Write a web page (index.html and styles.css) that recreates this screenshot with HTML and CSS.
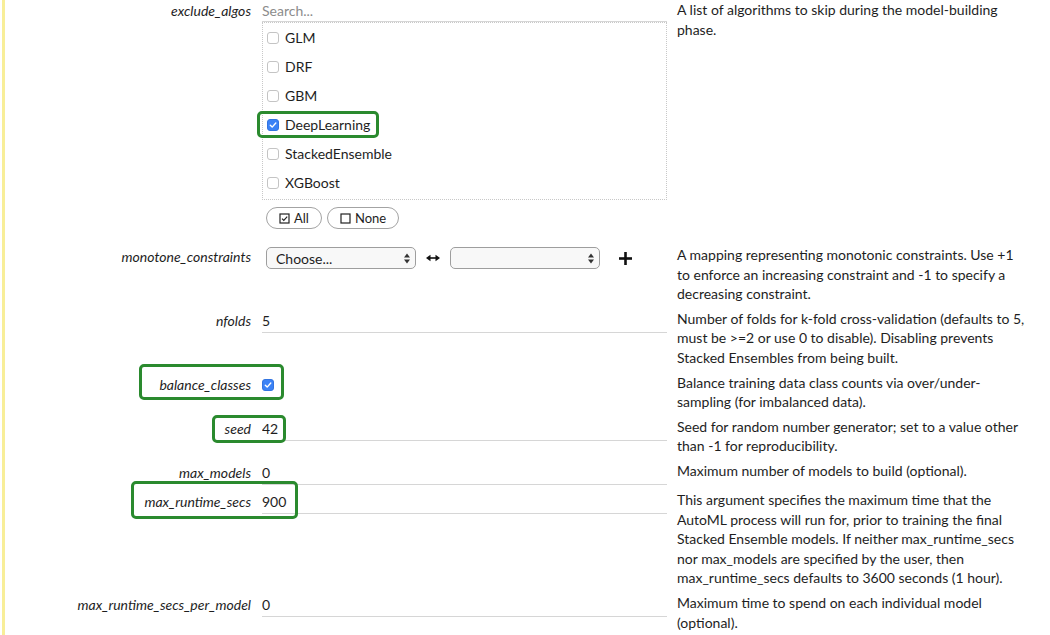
FILE: index.html
```html
<!DOCTYPE html>
<html lang="en">
<head>
<meta charset="utf-8">
<title>AutoML parameters</title>
<link rel="stylesheet" href="styles.css">
</head>
<body>
<div class="page">
  <div class="form">

    <div class="row first">
      <div class="label"><span>exclude_algos</span></div>
      <div class="control">
        <input class="text search" type="text" placeholder="Search...">
        <div class="list">
          <div class="item"><span class="item-in"><span class="cb"></span>GLM</span></div>
          <div class="item"><span class="item-in"><span class="cb"></span>DRF</span></div>
          <div class="item"><span class="item-in"><span class="cb"></span>GBM</span></div>
          <div class="item"><span class="item-in hl hl-deep"><span class="cb on"><svg width="10" height="10" viewBox="0 0 10 10"><polyline points="2.3,5.2 4.2,7.1 7.8,3" fill="none" stroke="#fff" stroke-width="1.4" stroke-linecap="round" stroke-linejoin="round"/></svg></span>DeepLearning</span></div>
          <div class="item"><span class="item-in"><span class="cb"></span>StackedEnsemble</span></div>
          <div class="item"><span class="item-in"><span class="cb"></span>XGBoost</span></div>
        </div>
        <div class="btns">
          <button class="pill" type="button"><svg width="11" height="11" viewBox="0 0 11 11"><rect x="1" y="1" width="9" height="9" fill="none" stroke="#222" stroke-width="1.2"/><polyline points="3,5.6 4.8,7.4 8.2,3.6" fill="none" stroke="#222" stroke-width="1.2"/></svg>All</button>
          <button class="pill" type="button"><svg width="11" height="11" viewBox="0 0 11 11"><rect x="1" y="1" width="9" height="9" fill="none" stroke="#222" stroke-width="1.2"/></svg>None</button>
        </div>
      </div>
      <div class="desc">A list of algorithms to skip during the model-building phase.</div>
    </div>

    <div class="row">
      <div class="label"><span>monotone_constraints</span></div>
      <div class="control mono">
        <div class="select">
          <select><option>Choose...</option></select>
          <svg class="arrows" width="6" height="11" viewBox="0 0 6 11"><polygon points="0,4.5 3,0.5 6,4.5" fill="#333"/><polygon points="0,6.5 3,10.5 6,6.5" fill="#333"/></svg>
        </div>
        <svg class="lr" width="14" height="8" viewBox="0 0 14 8"><line x1="3" y1="4" x2="11" y2="4" stroke="#111" stroke-width="1.6"/><polygon points="0,4 4.5,0.8 4.5,7.2" fill="#111"/><polygon points="14,4 9.5,0.8 9.5,7.2" fill="#111"/></svg>
        <div class="select">
          <select><option></option></select>
          <svg class="arrows" width="6" height="11" viewBox="0 0 6 11"><polygon points="0,4.5 3,0.5 6,4.5" fill="#333"/><polygon points="0,6.5 3,10.5 6,6.5" fill="#333"/></svg>
        </div>
        <svg class="plus" width="13" height="13" viewBox="0 0 13 13"><line x1="6.5" y1="0" x2="6.5" y2="13" stroke="#111" stroke-width="2.6"/><line x1="0" y1="6.5" x2="13" y2="6.5" stroke="#111" stroke-width="2.6"/></svg>
      </div>
      <div class="desc">A mapping representing monotonic constraints. Use +1 to enforce an increasing constraint and -1 to specify a decreasing constraint.</div>
    </div>

    <div class="row">
      <div class="label"><span>nfolds</span></div>
      <div class="control"><input class="text" type="text" value="5"></div>
      <div class="desc">Number of folds for k-fold cross-validation (defaults to 5, must be &gt;=2 or use 0 to disable). Disabling prevents Stacked Ensembles from being built.</div>
    </div>

    <div class="row">
      <div class="label"><span class="hl hl-balance">balance_classes</span></div>
      <div class="control check"><span class="cb on solo"><svg width="10" height="10" viewBox="0 0 10 10"><polyline points="2.3,5.2 4.2,7.1 7.8,3" fill="none" stroke="#fff" stroke-width="1.4" stroke-linecap="round" stroke-linejoin="round"/></svg></span></div>
      <div class="desc">Balance training data class counts via over/under-sampling (for imbalanced data).</div>
    </div>

    <div class="row">
      <div class="label"><span class="hl hl-seed">seed</span></div>
      <div class="control"><input class="text" type="text" value="42"></div>
      <div class="desc">Seed for random number generator; set to a value other than -1 for reproducibility.</div>
    </div>

    <div class="row">
      <div class="label"><span>max_models</span></div>
      <div class="control"><input class="text" type="text" value="0"></div>
      <div class="desc">Maximum number of models to build (optional).</div>
    </div>

    <div class="row">
      <div class="label"><span class="hl hl-runtime">max_runtime_secs</span></div>
      <div class="control"><input class="text" type="text" value="900"></div>
      <div class="desc">This argument specifies the maximum time that the AutoML process will run for, prior to training the final Stacked Ensemble models. If neither max_runtime_secs nor max_models are specified by the user, then max_runtime_secs defaults to 3600 seconds (1 hour).</div>
    </div>

    <div class="row">
      <div class="label"><span>max_runtime_secs_per_model</span></div>
      <div class="control"><input class="text" type="text" value="0"></div>
      <div class="desc">Maximum time to spend on each individual model (optional).</div>
    </div>

  </div>
</div>
</body>
</html>
```

FILE: styles.css
```css
* {
  box-sizing: border-box;
}

html,
body {
  margin: 0;
  padding: 0;
  background: #fff;
}

body {
  font-family: Lato, "Noto Sans", sans-serif;
  font-size: 14px;
  color: #1e1e1e;
}

.page {
  margin-left: 2px;
  border-left: 3px solid #f8ee98;
  height: 635px;
  overflow: hidden;
}

.row {
  display: grid;
  grid-template-columns: 246px 416px 360px;
  padding: 2px 0 3px;
}

.row.first {
  padding-top: 0;
}

.label {
  text-align: right;
  font-style: italic;
  line-height: 24px;
  white-space: nowrap;
}

.row.first .label {
  line-height: 22px;
}

.label span {
  display: inline-block;
  position: relative;
}

.control {
  padding-left: 11px;
  min-width: 0;
}

.desc {
  padding-left: 10px;
  line-height: 19.6px;
}

.text {
  display: block;
  width: 100%;
  height: 24px;
  margin: 0;
  border: 0;
  border-bottom: 1px solid #d6d6d6;
  padding: 0;
  font: inherit;
  color: #1e1e1e;
  background: transparent;
  outline: none;
}

.text.search {
  height: 22px;
}

.text::placeholder {
  color: #8c8c8c;
}

.list {
  border: 1px dotted #c8c8c8;
  padding: 0 4px 2px;
}

.item {
  display: flex;
  align-items: center;
  height: 29px;
  line-height: 19.6px;
}

.item-in {
  display: inline-flex;
  align-items: center;
  position: relative;
}

.cb {
  width: 12px;
  height: 12px;
  border: 1px solid #c4c4c4;
  border-radius: 3px;
  background: #fff;
  margin-right: 6px;
  display: inline-flex;
  align-items: center;
  justify-content: center;
  flex: none;
}

.cb.on {
  background: #3b82f6;
  border-color: #3274e0;
}

.cb.solo {
  margin-right: 0;
}

.control.check {
  display: flex;
  align-items: center;
  height: 24px;
}

.btns {
  display: flex;
  gap: 5px;
  margin: 7px 0 11px 4px;
}

.pill {
  display: inline-flex;
  align-items: center;
  gap: 4px;
  height: 22px;
  padding: 0 12px;
  margin: 0;
  border: 1px solid #a3a3a3;
  border-radius: 11px;
  background: #fff;
  font-family: Lato, "Noto Sans", sans-serif;
  font-size: 13px;
  color: #1e1e1e;
}

.control.mono {
  display: flex;
  align-items: center;
  align-self: start;
  padding-left: 15px;
  padding-top: 2px;
}

.select {
  display: flex;
  align-items: center;
  width: 150px;
  height: 22px;
  border: 1px solid #9e9e9e;
  border-radius: 5px;
  background: #f8f8f8;
  flex: none;
}

.select select {
  appearance: none;
  -webkit-appearance: none;
  flex: 1;
  min-width: 0;
  height: 100%;
  border: 0;
  background: transparent;
  padding: 0 0 0 9px;
  margin: 0;
  font-family: Lato, "Noto Sans", sans-serif;
  font-size: 14px;
  color: #1e1e1e;
  outline: none;
}

.select .arrows {
  margin-right: 5px;
  flex: none;
}

.lr {
  margin: 0 10px;
  flex: none;
}

.plus {
  margin-left: 19px;
  flex: none;
}

.hl::after {
  content: "";
  position: absolute;
  border: 3px solid #2a8a2e;
  border-radius: 5px;
  pointer-events: none;
}

.hl-deep::after {
  top: -4px;
  bottom: -4px;
  left: -10px;
  right: -9px;
}

.hl-balance::after {
  top: -9px;
  bottom: -3px;
  left: -20px;
  right: -33px;
}

.hl-seed::after {
  top: -2px;
  bottom: -2px;
  left: -13px;
  right: -35px;
}

.hl-runtime::after {
  top: -9px;
  bottom: -5px;
  left: -13px;
  right: -47px;
}
```
